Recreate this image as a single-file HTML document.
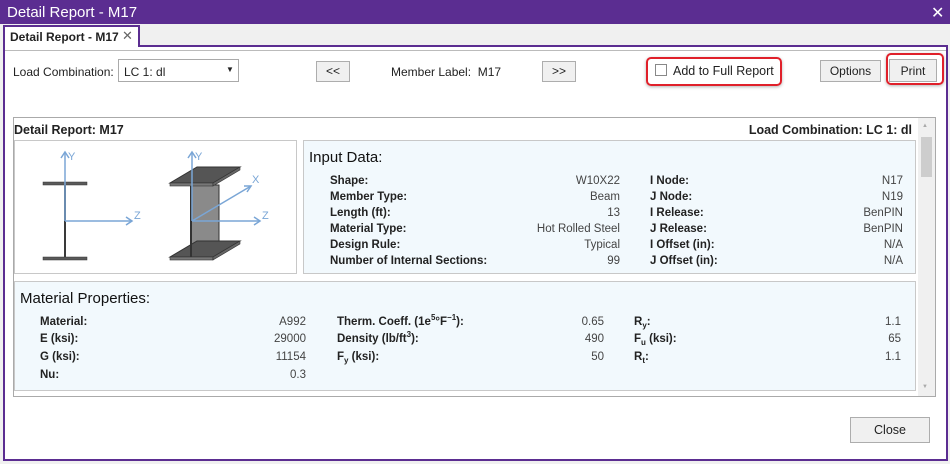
<!DOCTYPE html>
<html><head><meta charset="utf-8"><style>
*{margin:0;padding:0;box-sizing:border-box}
body{width:950px;height:464px;background:#fff;font-family:"Liberation Sans",sans-serif;font-size:12px;color:#222;position:relative;overflow:hidden}
.a{position:absolute;white-space:nowrap}
.btn{position:absolute;border:1px solid #adadad;background:#f0f0f0;text-align:center;font-size:12px;color:#222}
.lb{position:absolute;font-weight:bold;font-size:11.5px;color:#222;white-space:nowrap;line-height:14px}
.v{position:absolute;font-size:11.5px;color:#444;text-align:right;white-space:nowrap;line-height:14px}
sub,sup{font-size:8px;line-height:0;vertical-align:0;position:relative}
sup{top:-5px}
sub{top:3px}
</style></head><body>
<div class="a" style="left:0;top:0;width:950px;height:24px;background:#5b2d91"></div>
<div class="a" style="left:7px;top:4px;color:#fff;font-size:15px">Detail Report - M17</div>
<div class="a" style="left:931px;top:3px;color:#fff;font-size:16px">✕</div>
<div class="a" style="left:0;top:24px;width:950px;height:440px;background:#f0f0f0"></div>
<div class="a" style="left:3px;top:45px;width:945px;height:416px;border:2px solid #5b2d91;background:#fff"></div>
<div class="a" style="left:3px;top:25px;width:137px;height:22px;border:2px solid #5b2d91;border-bottom:none;background:#fff"></div>
<div class="a" style="left:10px;top:30px;font-weight:bold;font-size:12px;color:#222">Detail Report - M17</div>
<div class="a" style="left:122px;top:28px;font-size:13px;color:#666">✕</div>
<div class="a" style="left:5px;top:50px;width:941px;height:1px;background:#bbb"></div>
<div class="a" style="left:13px;top:65px">Load Combination:</div>
<div class="a" style="left:118px;top:59px;width:121px;height:23px;border:1px solid #aaa;background:#fff"></div>
<div class="a" style="left:124px;top:65px">LC 1: dl</div>
<div class="a" style="left:226px;top:65px;font-size:8px">▼</div>
<div class="btn" style="left:316px;top:61px;width:34px;height:21px;line-height:19px">&lt;&lt;</div>
<div class="a" style="left:391px;top:65px">Member Label:&nbsp; M17</div>
<div class="btn" style="left:542px;top:61px;width:34px;height:21px;line-height:19px">&gt;&gt;</div>
<div class="a" style="left:646px;top:57px;width:136px;height:29px;border:2px solid #e0202a;border-radius:5px;box-shadow:0 1px 3px rgba(0,0,0,.3)"></div>
<div class="a" style="left:655px;top:64px;width:12px;height:12px;border:1px solid #888;background:#fff"></div>
<div class="a" style="left:673px;top:64px;font-size:12.5px">Add to Full Report</div>
<div class="btn" style="left:820px;top:60px;width:61px;height:22px;line-height:21px">Options</div>
<div class="a" style="left:886px;top:53px;width:58px;height:32px;border:2px solid #e0202a;border-radius:5px;box-shadow:0 1px 3px rgba(0,0,0,.3)"></div>
<div class="btn" style="left:889px;top:59px;width:48px;height:23px;line-height:22px">Print</div>
<div class="a" style="left:13px;top:117px;width:923px;height:280px;border:1px solid #aaa;background:#fff"></div>
<div class="a" style="left:14px;top:123px;font-weight:bold;font-size:12.5px">Detail Report: M17</div>
<div class="a" style="left:700px;top:123px;width:212px;text-align:right;font-weight:bold;font-size:12.5px">Load Combination: LC 1: dl</div>
<div class="a" style="left:918px;top:118px;width:17px;height:278px;background:#f0f0f0"></div>
<div class="a" style="left:921px;top:137px;width:11px;height:40px;background:#cdcdcd"></div>
<div class="a" style="left:922px;top:123px;font-size:6px;color:#aaa">▲</div>
<div class="a" style="left:922px;top:384px;font-size:6px;color:#aaa">▼</div>
<div class="a" style="left:14px;top:140px;width:283px;height:134px;border:1px solid #c8c8c8;background:#fff"></div>
<svg class="a" style="left:0;top:0" width="300" height="280">
 <g fill="#5a5a5a" stroke="#333" stroke-width="0.5">
  <rect x="43" y="182" width="44" height="3"/><rect x="43" y="257" width="44" height="3"/>
 </g>
 <line x1="65" y1="185" x2="65" y2="257" stroke="#3a3a3a" stroke-width="2"/>
 <g stroke="#7aa6d6" stroke-width="1.5" fill="none">
  <line x1="65" y1="221" x2="65" y2="152"/><path d="M61 158 L65 152 L69 158"/>
  <line x1="65" y1="221" x2="132" y2="221"/><path d="M126 217 L132 221 L126 225"/>
 </g>
 <polygon points="191,185 219,185 219,256 191,256" fill="#8a8a8a" stroke="#333" stroke-width="1"/>
 <polygon points="170,183 213,183 240,167 197,167" fill="#555" stroke="#333" stroke-width="1"/>
 <rect x="170" y="183" width="43" height="3" fill="#777" stroke="#333" stroke-width="0.6"/>
 <polygon points="213,183 240,167 240,170 213,186" fill="#666" stroke="#333" stroke-width="0.6"/>
 <polygon points="170,257 213,257 240,241 197,241" fill="#555" stroke="#333" stroke-width="1"/>
 <rect x="170" y="257" width="43" height="3" fill="#777" stroke="#333" stroke-width="0.6"/>
 <polygon points="213,257 240,241 240,244 213,260" fill="#666" stroke="#333" stroke-width="0.6"/>
 <line x1="191" y1="186" x2="191" y2="257" stroke="#333" stroke-width="2"/>
 <g stroke="#7aa6d6" stroke-width="1.5" fill="none">
  <line x1="192" y1="221" x2="192" y2="152"/><path d="M188 158 L192 152 L196 158"/>
  <line x1="192" y1="221" x2="251" y2="186"/><path d="M244 186 L251 186 L247 192"/>
  <line x1="192" y1="221" x2="260" y2="221"/><path d="M254 217 L260 221 L254 225"/>
 </g>
 <g fill="#7aa6d6" font-family="Liberation Sans,sans-serif" font-size="11">
  <text x="68" y="160">Y</text><text x="134" y="219">Z</text>
  <text x="195" y="160">Y</text><text x="252" y="183">X</text><text x="262" y="219">Z</text>
 </g>
</svg>
<div class="a" style="left:303px;top:140px;width:613px;height:134px;border:1px solid #c8c8c8;background:#f2f9fd"></div>
<div class="a" style="left:309px;top:149px;font-size:15px;color:#111">Input Data:</div>
<div class="lb" style="left:330px;top:174px">Shape:</div>
<div class="lb" style="left:330px;top:190px">Member Type:</div>
<div class="lb" style="left:330px;top:206px">Length (ft):</div>
<div class="lb" style="left:330px;top:222px">Material Type:</div>
<div class="lb" style="left:330px;top:238px">Design Rule:</div>
<div class="lb" style="left:330px;top:254px">Number of Internal Sections:</div>
<div class="v" style="left:480px;width:140px;top:174px">W10X22</div>
<div class="v" style="left:480px;width:140px;top:190px">Beam</div>
<div class="v" style="left:480px;width:140px;top:206px">13</div>
<div class="v" style="left:480px;width:140px;top:222px">Hot Rolled Steel</div>
<div class="v" style="left:480px;width:140px;top:238px">Typical</div>
<div class="v" style="left:480px;width:140px;top:254px">99</div>
<div class="lb" style="left:650px;top:174px">I Node:</div>
<div class="lb" style="left:650px;top:190px">J Node:</div>
<div class="lb" style="left:650px;top:206px">I Release:</div>
<div class="lb" style="left:650px;top:222px">J Release:</div>
<div class="lb" style="left:650px;top:238px">I Offset (in):</div>
<div class="lb" style="left:650px;top:254px">J Offset (in):</div>
<div class="v" style="left:763px;width:140px;top:174px">N17</div>
<div class="v" style="left:763px;width:140px;top:190px">N19</div>
<div class="v" style="left:763px;width:140px;top:206px">BenPIN</div>
<div class="v" style="left:763px;width:140px;top:222px">BenPIN</div>
<div class="v" style="left:763px;width:140px;top:238px">N/A</div>
<div class="v" style="left:763px;width:140px;top:254px">N/A</div>
<div class="a" style="left:14px;top:281px;width:902px;height:110px;border:1px solid #c8c8c8;background:#f2f9fd"></div>
<div class="a" style="left:20px;top:290px;font-size:15px;color:#111">Material Properties:</div>
<div class="lb" style="left:40px;top:315px">Material:</div>
<div class="lb" style="left:40px;top:332px">E (ksi):</div>
<div class="lb" style="left:40px;top:350px">G (ksi):</div>
<div class="lb" style="left:40px;top:368px">Nu:</div>
<div class="v" style="left:200px;width:106px;top:315px">A992</div>
<div class="v" style="left:200px;width:106px;top:332px">29000</div>
<div class="v" style="left:200px;width:106px;top:350px">11154</div>
<div class="v" style="left:200px;width:106px;top:368px">0.3</div>
<div class="lb" style="left:337px;top:315px">Therm. Coeff. (1e<sup>5</sup>°F<sup>−1</sup>):</div>
<div class="lb" style="left:337px;top:332px">Density (lb/ft<sup>3</sup>):</div>
<div class="lb" style="left:337px;top:350px">F<sub>y</sub> (ksi):</div>
<div class="v" style="left:500px;width:104px;top:315px">0.65</div>
<div class="v" style="left:500px;width:104px;top:332px">490</div>
<div class="v" style="left:500px;width:104px;top:350px">50</div>
<div class="lb" style="left:634px;top:315px">R<sub>y</sub>:</div>
<div class="lb" style="left:634px;top:332px">F<sub>u</sub> (ksi):</div>
<div class="lb" style="left:634px;top:350px">R<sub>t</sub>:</div>
<div class="v" style="left:800px;width:101px;top:315px">1.1</div>
<div class="v" style="left:800px;width:101px;top:332px">65</div>
<div class="v" style="left:800px;width:101px;top:350px">1.1</div>
<div class="btn" style="left:850px;top:417px;width:80px;height:26px;line-height:24px;font-size:12.5px">Close</div>
</body></html>
